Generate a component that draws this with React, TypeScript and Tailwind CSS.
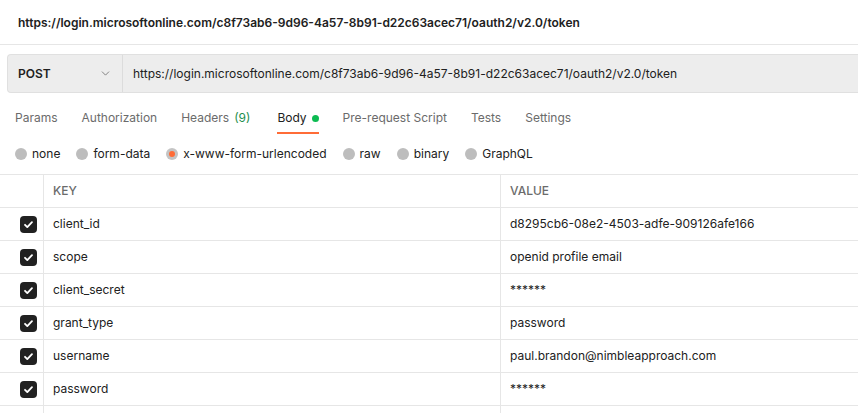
import { ChevronDown } from 'lucide-react';

const URL = 'https://login.microsoftonline.com/c8f73ab6-9d96-4a57-8b91-d22c63acec71/oauth2/v2.0/token';

const tabs = [
  { label: 'Params' },
  { label: 'Authorization' },
  { label: 'Headers', count: '(9)' },
  { label: 'Body', active: true },
  { label: 'Pre-request Script' },
  { label: 'Tests' },
  { label: 'Settings' },
];

const bodyTypes = ['none', 'form-data', 'x-www-form-urlencoded', 'raw', 'binary', 'GraphQL'];

const rows = [
  { key: 'client_id', value: 'd8295cb6-08e2-4503-adfe-909126afe166' },
  { key: 'scope', value: 'openid profile email' },
  { key: 'client_secret', value: '******' },
  { key: 'grant_type', value: 'password' },
  { key: 'username', value: 'paul.brandon@nimbleapproach.com' },
  { key: 'password', value: '******' },
];

function Check() {
  return (
    <span className="flex h-[17px] w-[17px] items-center justify-center rounded-[4px] bg-[#212121]">
      <svg width="11" height="11" viewBox="0 0 12 12" fill="none">
        <path d="M2.2 6.3l2.5 2.5 5.1-5.3" stroke="white" strokeWidth="2" strokeLinecap="round" strokeLinejoin="round" />
      </svg>
    </span>
  );
}

export default function App() {
  return (
    <div className="h-[413px] w-[858px] overflow-hidden bg-white text-[#212121]" style={{ fontFamily: 'Inter, "Noto Sans", sans-serif' }}>
      {/* request title */}
      <div className="flex h-[45px] items-center border-b border-[#e6e6e6] pl-[18px] pt-[1px] text-[12px] font-semibold">
        {URL}
      </div>

      {/* method + url */}
      <div className="pl-[7px] pt-[9px]">
        <div className="flex h-[39px] items-center rounded-l-[4px] border border-r-0 border-[#e0e0e0] bg-[#ededed]">
          <div className="flex h-full w-[115px] items-center justify-between border-r border-[#dcdcdc] pl-[10px] pr-[10px]">
            <span className="text-[12px] font-semibold">POST</span>
            <ChevronDown size={13} strokeWidth={1.5} className="text-[#6b6b6b]" />
          </div>
          <span className="pl-[10px] text-[12px]">{URL}</span>
        </div>
      </div>

      {/* tabs */}
      <div className="mt-[11px] flex h-[30px] items-stretch gap-[24px] pl-[15px] text-[12px] text-[#6b6b6b]">
        {tabs.map((t) => (
          <div
            key={t.label}
            className={`flex items-center border-b-2 ${t.active ? 'border-[#ff6c37] text-[#212121]' : 'border-transparent'}`}
          >
            {t.label}
            {t.count && <span className="ml-[5px] mr-[3px] text-[#1e8f4e]">{t.count}</span>}
            {t.active && <span className="ml-[5px] h-[7px] w-[7px] rounded-full bg-[#0cbb52]" />}
          </div>
        ))}
      </div>

      {/* body types */}
      <div className="flex h-[41px] items-center gap-[16px] border-b border-[#e6e6e6] pl-[15px] text-[12px]">
        {bodyTypes.map((b) => (
          <div key={b} className="flex items-center gap-[5px]">
            {b === 'x-www-form-urlencoded' ? (
              <span className="flex h-[12px] w-[12px] items-center justify-center rounded-full bg-[#c4c4c4]">
                <span className="h-[6px] w-[6px] rounded-full bg-[#ff6c37]" />
              </span>
            ) : (
              <span className="h-[12px] w-[12px] rounded-full bg-[#bdbdbd]" />
            )}
            <span>{b}</span>
          </div>
        ))}
      </div>

      {/* params table */}
      <div className="text-[12px]">
        <div className="flex h-[33px] border-b border-[#e6e6e6] text-[#6b6b6b]">
          <div className="w-[44px] border-r border-[#e6e6e6]" />
          <div className="flex w-[457px] items-center border-r border-[#e6e6e6] pl-[9px] font-medium">KEY</div>
          <div className="flex flex-1 items-center pl-[9px] font-medium">VALUE</div>
        </div>
        {rows.map((r) => (
          <div key={r.key} className="flex h-[33px] border-b border-[#e6e6e6]">
            <div className="flex w-[44px] items-center justify-end border-r border-[#e6e6e6] pr-[6px]">
              <Check />
            </div>
            <div className="flex w-[457px] items-center border-r border-[#e6e6e6] pl-[9px]">{r.key}</div>
            <div className="flex flex-1 items-center pl-[9px]">{r.value}</div>
          </div>
        ))}
        <div className="flex h-[33px]">
          <div className="w-[44px] border-r border-[#e6e6e6]" />
          <div className="w-[457px] border-r border-[#e6e6e6]" />
        </div>
      </div>
    </div>
  );
}
